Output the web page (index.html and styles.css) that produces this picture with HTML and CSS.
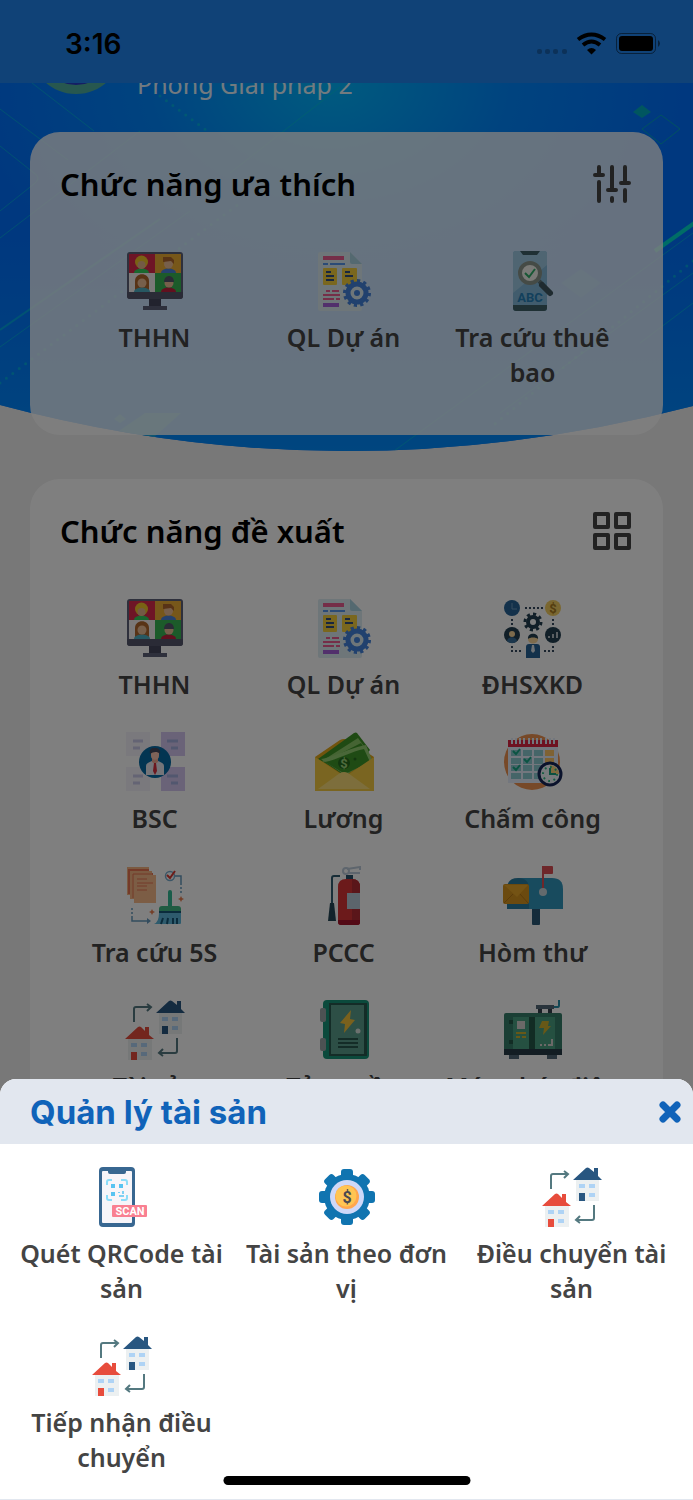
FILE: index.html
```html
<!doctype html>
<html lang="vi">
    <head>
        <meta charset="UTF-8" />
        <meta name="viewport" content="width=device-width, initial-scale=1.0" />
        <title>Quản lý tài sản</title>
        <link rel="stylesheet" href="styles.css">
    </head>
    <body>
        <!-- Icon library -->
        <svg class="sprite" aria-hidden="true">
            <symbol id="i-meeting" viewBox="0 0 60 60">
                <rect x="2" y="1" width="56" height="47" rx="3" fill="#5d6078" />
                <path d="M2 41h56v4a3 3 0 0 1-3 3H5a3 3 0 0 1-3-3z" fill="#54566c" />
                <path d="M4 3h26v19H4z" fill="#dc2a4c" />
                <path d="M30 3h26v19H30z" fill="#efae34" />
                <path d="M4 22h26v19H4z" fill="#f6f2f2" />
                <path d="M30 22h26v19H30z" fill="#38b755" />
                <path d="M9 22c0-6 15-6 15 0z" fill="#35d05e" />
                <circle cx="16.5" cy="11" r="6.5" fill="#f3c529" />
                <circle cx="16.5" cy="14" r="4" fill="#e6b58a" />
                <path d="M36 22c0-6 15-6 15 0z" fill="#4a83da" />
                <circle cx="43.5" cy="13" r="4.5" fill="#efbf97" />
                <path d="M38 11V6h8l3 3v4l-3-3z" fill="#b0662c" />
                <path d="M10 39V30c0-9 14-9 14 0v9z" fill="#b0662c" />
                <path d="M9 41c0-6 16-6 16 0z" fill="#4fb1c4" />
                <circle cx="17" cy="32" r="4.5" fill="#efbf97" />
                <path d="M36 41c0-6 15-6 15 0z" fill="#c3203e" />
                <circle cx="44" cy="32" r="4.5" fill="#efbf97" />
                <path d="M39 31c0-8 10-8 10 0z" fill="#54566c" />
                <path d="M24 48h12v8H24z" fill="#45475c" />
                <path d="M18 55h24v4H18z" fill="#5d6078" />
            </symbol>

            <symbol id="i-project" viewBox="0 0 60 60">
                <path d="M6 1h30l12 12v45a2 2 0 0 1-2 2H6a2 2 0 0 1-2-2V3a2 2 0 0 1 2-2z" fill="#dcecf2" />
                <path d="M36 1l12 12H38a2 2 0 0 1-2-2z" fill="#a9d2e0" />
                <path d="M9 5h21v4H9z" fill="#ea5c91" />
                <path d="M9 12h5v2H9zM16 12h15v2H16z" fill="#5796ec" />
                <rect x="9" y="17" width="14" height="17" rx="1" fill="#f5cf3c" />
                <rect x="28" y="17" width="15" height="17" rx="1" fill="#f5cf3c" />
                <path d="M12 21h5M12 25h8M12 29h8M31 21h5M31 25h8" stroke="#324e80" stroke-width="2" />
                <path d="M12 40h4M18 40h7M9 44h17M9 48h11M22 48h4" stroke="#ea5c91" stroke-width="2" />
                <path d="M9 52h16v4H9z" fill="#a560d8" />
                <circle cx="43" cy="42" r="9" fill="#dcecf2" stroke="#4282dc" stroke-width="5" />
                <circle cx="43" cy="42" r="12" fill="none" stroke="#4282dc" stroke-width="4" pathLength="24" stroke-dasharray="1" />
                <circle cx="43" cy="42" r="3" fill="#4282dc" />
            </symbol>

            <symbol id="i-lookup" viewBox="0 0 60 60">
                <rect x="10" y="0" width="34" height="60" rx="3" fill="#82b9db" />
                <path d="M10 42L44 14V3a3 3 0 0 0-3-3H13a3 3 0 0 0-3 3z" fill="#9fcbe5" />
                <path d="M10 54h34v3a3 3 0 0 1-3 3H13a3 3 0 0 1-3-3zM17 0h20l-3 4H20z" fill="#3e6068" />
                <path d="M36 30l4 4" stroke="#5f7579" stroke-width="4" />
                <path d="M39 34l8 8" stroke="#3e5660" stroke-width="6" stroke-linecap="round" />
                <circle cx="27" cy="22" r="10" fill="#f2f4ee" stroke="#8b968d" stroke-width="4" />
                <path d="M22 22l4 4 6-8" fill="none" stroke="#2fae69" stroke-width="2" />
                <text class="icon-word" x="27" y="51" fill="#2680b8">ABC</text>
            </symbol>

            <symbol id="i-operation" viewBox="0 0 60 60">
                <path d="M22 10h18M9 21v8M50 21v8M9 48v5h11M50 48v5H41" fill="none" stroke="#34495e" stroke-width="2" stroke-dasharray="2" />
                <circle cx="9" cy="10" r="8" fill="#266397" />
                <path d="M9 5v6h5" fill="none" stroke="#6b99be" stroke-width="1" />
                <circle cx="50" cy="10" r="8" fill="#f4ce62" />
                <text class="icon-coin" x="50" y="15" fill="#a87a20">$</text>
                <circle cx="9" cy="37" r="8" fill="#233e50" />
                <path d="M4 43c1-5 9-5 10 0-3 3-7 3-10 0z" fill="#366c98" />
                <circle cx="9" cy="36" r="3" fill="#fbd69a" />
                <circle cx="50" cy="37" r="8" fill="#233e50" />
                <path d="M46 40v-2M50 40v-4M54 40v-6" stroke="#b4bec6" stroke-width="2" />
                <circle cx="30" cy="24" r="5" fill="none" stroke="#233e50" stroke-width="4" />
                <circle cx="30" cy="24" r="8" fill="none" stroke="#233e50" stroke-width="3" pathLength="16" stroke-dasharray="1" />
                <path d="M23 60V49a3 3 0 0 1 3-3h8a3 3 0 0 1 3 3v11z" fill="#266397" />
                <path d="M25 41c-1-7 11-7 10 0z" fill="#233e50" />
                <path d="M25 41c2-2 8-2 10 0 0 6-10 6-10 0z" fill="#fbd69a" />
                <path d="M29 47h2l1 6-2 2-2-2z" fill="#dce5ec" />
            </symbol>

            <symbol id="i-bsc" viewBox="0 0 60 60">
                <path d="M1 0h24v24H1zM1 35h24v24H1z" fill="#f3f0fa" fill-opacity="0.8" />
                <path d="M36 0h24v24H36zM36 35h24v24H36z" fill="#d5c7f1" />
                <path d="M8 9h10M8 16h7M8 44h10M8 51h7" stroke="#c9c8e8" stroke-width="3" />
                <path d="M42 9h11M46 16h7M42 44h11M46 51h7" stroke="#a4aede" stroke-width="3" />
                <circle cx="30" cy="30" r="16" fill="#076ba4" />
                <path d="M21 43V34c0-3 4-4 6-5h6c2 1 6 2 6 5v9z" fill="#eaeaf2" />
                <path d="M27 26h6v4l-3 2-3-2z" fill="#f0aa94" />
                <path d="M26 19h8v5c0 5-8 5-8 0z" fill="#ffc6b1" />
                <path d="M25 22c-1-6 2-6 5-6s6 1 5 6c-3-3-7-2-10 0z" fill="#43495c" />
                <path d="M29 31h2l1 8-2 4-2-4z" fill="#d8303f" />
            </symbol>

            <symbol id="i-salary" viewBox="0 0 60 60">
                <path d="M1 25L26 8q4-2 8 0l26 17v34H1z" fill="#e3a81b" />
                <path d="M4 27L40 1q2-1 3 0l13 17-23 25z" fill="#3e9526" />
                <path d="M8 29L44 6l11 15-22 22z" fill="#8bc867" />
                <path d="M10 30L47 11l8 13-24 20z" fill="#3e9526" />
                <path d="M7 27c10-1 31-12 45-14l6 15-27 15z" fill="#95cf72" />
                <path d="M11 30c11-2 28-11 39-13l6 13-25 12z" fill="#3f9629" />
                <circle cx="30" cy="31" r="6" fill="#276d1e" />
                <text class="icon-coin" x="30" y="36" fill="#9fd67c">$</text>
                <circle cx="41" cy="27" r="1.5" fill="#276d1e" />
                <path d="M1 25l26 17q4 2 8 0l25-17v34H1z" fill="#f4cb42" />
                <path d="M4 57l22-16q4-2 8 0l22 16z" fill="#fadd78" />
            </symbol>

            <symbol id="i-attendance" viewBox="0 0 60 60">
                <circle cx="29" cy="30" r="28" fill="#ef9250" />
                <path d="M5 15h50v36H5z" fill="#e6effc" />
                <path d="M5 8h50v7H5z" fill="#dd2442" />
                <path d="M9 6v6M13 6v6M17 6v6M21 6v6M26 6v6M30 6v6M34 6v6M38 6v6M43 6v6M47 6v6M51 6v6" stroke="#e6effc" stroke-width="2" />
                <path d="M8 21h10M20 21h9M31 21h9M8 29h10M20 29h9M31 29h9M8 36h10M20 36h9M31 36h9M8 44h10M20 44h9M31 44h9" stroke="#8bcad1" stroke-width="6" />
                <path d="M42 21h9M42 29h9" stroke="#ffc466" stroke-width="6" />
                <path d="M10 19l3 3 4-5M21 27l3 3 4-5M10 35l3 3 4-5" fill="none" stroke="#17a886" stroke-width="2" />
                <circle cx="47" cy="42" r="11" fill="#f1f6fb" stroke="#172758" stroke-width="3" />
                <path d="M47 42v-9a9 9 0 0 1 9 9z" fill="#ffd57d" />
                <circle cx="47" cy="42" r="7" fill="none" stroke="#33bb86" stroke-width="2" pathLength="24" stroke-dasharray="1 2" />
                <path d="M47 36v6h6" fill="none" stroke="#18a17f" stroke-width="2" />
            </symbol>

            <symbol id="i-clean" viewBox="0 0 60 60">
                <path d="M2 1h22v28H2z" fill="#f7b583" />
                <path d="M4 28V4h20M8 32V8h20" fill="none" stroke="#e87552" stroke-width="2" />
                <path d="M5 5h22v28H5z" fill="#f7b583" />
                <path d="M8 32V8h20" fill="none" stroke="#e87552" stroke-width="1" />
                <path d="M9 9h22v28H9z" fill="#f9bb8b" />
                <path d="M12 13h10M12 17h16M12 20h10M12 24h10" stroke="#e87552" stroke-width="1" />
                <circle cx="45" cy="10" r="4.5" fill="none" stroke="#79adce" stroke-width="1.5" />
                <path d="M42 9l3 3 5-7" fill="none" stroke="#db3932" stroke-width="2" />
                <path d="M50 10h6v9M56 21v2M56 25v2M7 42v2M7 46v2M7 50v5h15" fill="none" stroke="#6699bd" stroke-width="1.5" />
                <path d="M22 52l4 3-4 3z" fill="#6699bd" />
                <path d="M27 43l1 2 2 1-2 1-1 2-1-2-2-1 2-1zM56 30l1 2 2 1-2 1-1 2-1-2-2-1 2-1z" fill="#e97f51" />
                <rect x="43" y="24" width="4" height="18" rx="2" fill="#33bb94" />
                <path d="M34 45v-2a3 3 0 0 1 3-3h16a3 3 0 0 1 3 3v2z" fill="#41b884" />
                <path d="M34 47h22v10a1 1 0 0 1-1 1H29q5-2 5-11z" fill="#5cb6da" />
                <path d="M34 46h22M38 52l-2 6M43 52l-1 6M48 52v6M52 52v6" stroke="#175878" stroke-width="2" />
            </symbol>

            <symbol id="i-fire" viewBox="0 0 60 60">
                <path d="M33 3l13-2v3M35 7h11" fill="none" stroke="#bccbda" stroke-width="2" />
                <circle cx="32" cy="5" r="3" fill="none" stroke="#bccbda" stroke-width="2" />
                <path d="M26 10h-6q-2 0-2 2v26" fill="none" stroke="#315d70" stroke-width="2" />
                <path d="M16 37h4l2 18h-8z" fill="#244656" />
                <path d="M32 9h7v6h-7z" fill="#28506a" />
                <path d="M24 56V21q0-8 8-8h6q8 0 8 8v35q0 3-3 3H27q-3 0-3-3z" fill="#d83537" />
                <path d="M38 13q8 0 8 8v35q0 3-3 3h-5z" fill="#b52d34" />
                <path d="M24 54h22v2q0 3-3 3H27q-3 0-3-3z" fill="#a6152c" />
                <path d="M33 27h13v16H33z" fill="#b9cad9" />
            </symbol>

            <symbol id="i-mail" viewBox="0 0 60 60">
                <path d="M29 42h8v16a1 1 0 0 1-1 1h-6a1 1 0 0 1-1-1z" fill="#2b5876" />
                <path d="M15 12h34q11 0 11 11v20H15z" fill="#3196bd" />
                <path d="M4 43V23q0-11 11-11t11 11v20z" fill="#297ca0" />
                <rect x="0" y="18" width="26" height="20" rx="2" fill="#d6951f" />
                <path d="M1 19l13 12 11-12z" fill="#e8a628" />
                <path d="M1 37l9-9M25 37l-8-9" stroke="#b87817" stroke-width="1" />
                <path d="M40 0v24" stroke="#dc4e55" stroke-width="2" />
                <rect x="39" y="0" width="11" height="8" rx="1" fill="#dc4e55" />
                <circle cx="40" cy="26" r="4" fill="#c9d5da" />
            </symbol>

            <symbol id="i-transfer" viewBox="0 0 60 60">
                <path d="M34 12h23v22H34z" fill="#ecf0f1" />
                <path d="M31 13L44 1q1.5-1 3 0l5 4V1h4v8l4 4z" fill="#285680" />
                <path d="M37 17h6v4h-6zM47 17h6v4h-6zM47 26h6v4h-6z" fill="#aed3f5" />
                <path d="M37 26h6v8h-6z" fill="#285680" />
                <path d="M3 38h24v22H3z" fill="#ecf0f1" />
                <path d="M0 39l13-12q1.5-1 3 0l4 4v-4h4v8l5 4z" fill="#e74c3c" />
                <path d="M6 43h6v4H6zM16 43h6v4h-6zM16 52h6v4h-6z" fill="#aed3f5" />
                <path d="M6 52h6v8H6z" fill="#e74c3c" />
                <path d="M9 22V9q0-2 2-2h15M22 4l4 3-4 4M52 38v13q0 2-2 2H35M38 49l-4 4 4 3" fill="none" stroke="#547980" stroke-width="2" />
            </symbol>

            <symbol id="i-cabinet" viewBox="0 0 60 60">
                <rect x="9" y="0" width="46" height="59" rx="4" fill="#169578" />
                <path d="M15 3h38v53H15z" fill="#28594f" />
                <path d="M17 5h33v49H17z" fill="#5b9e8c" />
                <rect x="6" y="8" width="6" height="14" rx="2" fill="#99a4a6" />
                <rect x="6" y="38" width="6" height="13" rx="2" fill="#99a4a6" />
                <path d="M37 10L26 23l5 1-1 9 11-13-5-1z" fill="#f5c23b" />
                <circle cx="44" cy="31" r="2.5" fill="#d9e2df" />
                <path d="M24 39h20M24 43h20M24 47h20" stroke="#28594f" stroke-width="2" />
            </symbol>

            <symbol id="i-generator" viewBox="0 0 60 60">
                <path d="M35 9h4v5h-4zM45 9h4v5h-4z" fill="#35414d" />
                <path d="M33 5h18v4H33z" fill="#536978" />
                <path d="M51 7h4q1 0 1-2V0" fill="none" stroke="#248fa9" stroke-width="2" />
                <path d="M6 54h10v5H6zM44 54h10v5H44z" fill="#536978" />
                <rect x="1" y="13" width="58" height="38" rx="2" fill="#367e6b" />
                <path d="M10 17h16v32H10zM32 17h20v32H32z" fill="#4aa083" />
                <path d="M26 17h6v32h-6z" fill="#245848" />
                <path d="M1 49h58v6H1z" fill="#263b46" />
                <path d="M6 20h4v4H6zM6 40h4v4H6z" fill="#245848" />
                <path d="M14 21h8v8h-8z" fill="#d7d3d1" />
                <path d="M13 33h10M13 37h4M19 37h4" stroke="#cfb02f" stroke-width="2" />
                <path d="M39 21h7l-1 5h3l-8 9 1-7h-5z" fill="#cfb02f" />
                <path d="M37 45h2M41 45h2M45 45h4v-6" fill="none" stroke="#d7d3d1" stroke-width="2" />
            </symbol>

            <symbol id="i-scan" viewBox="0 0 60 60">
                <rect x="7" y="0" width="36" height="60" rx="4" fill="#386791" />
                <rect x="10" y="4" width="30" height="52" rx="1" fill="#f7f5f9" />
                <path d="M16 3h18v2q0 2-2 2H18q-2 0-2-2z" fill="#386791" />
                <path d="M15 18v-3q0-2 2-2h3M29 13h4q2 0 2 2v3M15 28v3q0 2 2 2h3M29 33h4q2 0 2-2v-3" fill="none" stroke="#8bdcf8" stroke-width="2" />
                <path d="M19 17h4v4h-4zM27 17h4v4h-4zM19 25h4v4h-4z" fill="#57c3f1" />
                <path d="M27 25v1M31 24v3M27 29h5" stroke="#57c3f1" stroke-width="1.5" />
                <rect x="20" y="38" width="35" height="12" rx="1" fill="#f98091" />
                <text class="icon-scan" x="38" y="48" fill="#fff">SCAN</text>
            </symbol>

            <symbol id="i-asset" viewBox="0 0 60 60">
                <g fill="#1074b0">
                    <rect x="24" y="2" width="12" height="56" rx="3" />
                    <rect x="24" y="2" width="12" height="56" rx="3" transform="rotate(45 30 30)" />
                    <rect x="24" y="2" width="12" height="56" rx="3" transform="rotate(90 30 30)" />
                    <rect x="24" y="2" width="12" height="56" rx="3" transform="rotate(135 30 30)" />
                    <circle cx="30" cy="30" r="23" />
                </g>
                <circle cx="30" cy="30" r="17" fill="#ced8f8" />
                <circle cx="30" cy="30" r="12" fill="#ffa64d" />
                <circle cx="29" cy="29" r="10.5" fill="#ffc553" />
                <text class="icon-dollar" x="30" y="36" fill="#4b4a50">$</text>
            </symbol>
        </svg>

        <header class="status-bar">
            <span class="status-time">3:16</span>
            <svg class="status-icons" viewBox="0 0 124 24" aria-hidden="true">
                <g class="status-signal">
                    <rect x="1" y="17" width="5" height="5" rx="2" />
                    <rect x="9" y="17" width="5" height="5" rx="2" />
                    <rect x="17" y="17" width="5" height="5" rx="2" />
                    <rect x="26" y="17" width="5" height="5" rx="2" />
                </g>
                <path d="M42 7.5q13.5-10 27 0M47 13q8.500-7 17 0" fill="none" stroke="#000" stroke-width="4" />
                <path d="M51 18q4.500-4 9 0l-4.500 4.500z" />
                <rect x="80.5" y="1.5" width="39" height="20" rx="5" fill="none" stroke="#000" stroke-opacity="0.5" />
                <rect x="83" y="4" width="34" height="15" rx="3" />
                <path d="M122 8q4 3.500 0 7z" fill-opacity="0.5" />
            </svg>
        </header>

        <main>
            <section class="hero">
                <svg class="hero-bg" viewBox="0 0 693 368" preserveAspectRatio="none" aria-hidden="true">
                    <defs>
                        <radialGradient id="sky" cx="330" cy="0" r="360" gradientUnits="userSpaceOnUse" gradientTransform="matrix(1 0 0 .7 0 0)">
                            <stop offset="0" stop-color="#00b6ff" />
                            <stop offset="0.5" stop-color="#0087ff" />
                            <stop offset="1" stop-color="#0070ff" />
                        </radialGradient>
                        <linearGradient id="edge" x1="0" y1="0" x2="0" y2="1">
                            <stop offset="0.4" stop-color="#0088ff" stop-opacity="0" />
                            <stop offset="1" stop-color="#008cff" />
                        </linearGradient>
                        <clipPath id="curve">
                            <path d="M0 0h693v323Q520 368 346 368T0 322z" />
                        </clipPath>
                    </defs>
                    <g clip-path="url(#curve)">
                        <path d="M0 0h693v368H0z" fill="url(#sky)" />
                        <path d="M0 0h693v368H0z" fill="url(#edge)" />
                        <g fill="none" stroke="#00d4ce" stroke-opacity="0.5">
                            <path d="M0 26l68 51M0 63l34 27q8 5 0 11L0 128M32 0l62 48M0 155L140 48M0 264L190 128M340 4L230 90" />
                            <path d="M0 247L160 136" stroke-width="2" />
                            <path d="M394 368L480 305L693 150M693 190L500 330M640 260l53-40" />
                            <path d="M0 300L240 120M160 13l50 37M693 178L490 345" stroke-width="3" stroke-linecap="round" stroke-dasharray="0 8" />
                        </g>
                        <path d="M655 168L700 136" stroke="#00f5c0" stroke-opacity="0.8" stroke-width="4" />
                        <path d="M642 22l9 7-9 6-9-6z" fill="#00adbf" />
                        <path d="M661 32l19 14-19 15-19-15z" fill="none" stroke="#00a4c4" />
                        <path d="M113 352l32-22h36l-30 27zM114 336l6-5 6 5-6 4z" fill="#2cbcd0" fill-opacity="0.7" />
                        <path d="M561 200l20-14 20 14-20 15z" fill="#2cbcd0" fill-opacity="0.3" />
                    </g>
                </svg>

                <div class="profile">
                    <span class="avatar"></span>
                    <span class="department">Phòng Giải pháp 2</span>
                </div>

                <div class="card card-favorite">
                    <div class="card-header">
                        <h2>Chức năng ưa thích</h2>
                        <button class="icon-button" type="button" aria-label="Tùy chỉnh">
                            <svg viewBox="0 0 38 38">
                                <path d="M6 2v6M2 10h8M6 17v19M19 2v23M15 25h8M19 33v3M32 2v15M28 18h8M32 25v11" />
                            </svg>
                        </button>
                    </div>
                    <nav class="tiles">
                        <a class="tile" href="#"><svg class="tile-icon"><use href="#i-meeting" /></svg>THHN</a>
                        <a class="tile" href="#"><svg class="tile-icon"><use href="#i-project" /></svg>QL Dự án</a>
                        <a class="tile" href="#"><svg class="tile-icon"><use href="#i-lookup" /></svg>Tra cứu thuê bao</a>
                    </nav>
                </div>
            </section>

            <section class="card card-suggest">
                <div class="card-header">
                    <h2>Chức năng đề xuất</h2>
                    <button class="icon-button" type="button" aria-label="Tất cả chức năng">
                        <svg viewBox="0 0 38 38">
                            <path d="M2 2h13v13H2zM23 2h13v13H23zM2 23h13v13H2zM23 23h13v13H23z" />
                        </svg>
                    </button>
                </div>
                <nav class="tiles">
                    <a class="tile" href="#"><svg class="tile-icon"><use href="#i-meeting" /></svg>THHN</a>
                    <a class="tile" href="#"><svg class="tile-icon"><use href="#i-project" /></svg>QL Dự án</a>
                    <a class="tile" href="#"><svg class="tile-icon"><use href="#i-operation" /></svg>ĐHSXKD</a>
                    <a class="tile" href="#"><svg class="tile-icon"><use href="#i-bsc" /></svg>BSC</a>
                    <a class="tile" href="#"><svg class="tile-icon"><use href="#i-salary" /></svg>Lương</a>
                    <a class="tile" href="#"><svg class="tile-icon"><use href="#i-attendance" /></svg>Chấm công</a>
                    <a class="tile" href="#"><svg class="tile-icon"><use href="#i-clean" /></svg>Tra cứu 5S</a>
                    <a class="tile" href="#"><svg class="tile-icon"><use href="#i-fire" /></svg>PCCC</a>
                    <a class="tile" href="#"><svg class="tile-icon"><use href="#i-mail" /></svg>Hòm thư</a>
                    <a class="tile" href="#"><svg class="tile-icon"><use href="#i-transfer" /></svg>Tài sản</a>
                    <a class="tile" href="#"><svg class="tile-icon"><use href="#i-cabinet" /></svg>Tủ nguồn</a>
                    <a class="tile" href="#"><svg class="tile-icon"><use href="#i-generator" /></svg>Máy phát điện</a>
                </nav>
            </section>
        </main>

        <div class="backdrop"></div>

        <section class="sheet" role="dialog" aria-labelledby="sheet-title">
            <div class="sheet-header">
                <h1 id="sheet-title">Quản lý tài sản</h1>
                <button class="sheet-close" type="button" aria-label="Đóng">
                    <svg viewBox="0 0 22 22">
                        <path d="M4 4l14 14M18 4L4 18" />
                    </svg>
                </button>
            </div>
            <nav class="tiles sheet-tiles">
                <a class="tile" href="#"><svg class="tile-icon"><use href="#i-scan" /></svg>Quét QRCode tài sản</a>
                <a class="tile" href="#"><svg class="tile-icon"><use href="#i-asset" /></svg>Tài sản theo đơn vị</a>
                <a class="tile" href="#"><svg class="tile-icon"><use href="#i-transfer" /></svg>Điều chuyển tài sản</a>
                <a class="tile" href="#"><svg class="tile-icon"><use href="#i-transfer" /></svg>Tiếp nhận điều chuyển</a>
            </nav>
            <span class="home-indicator"></span>
        </section>
    </body>
</html>
```
FILE: styles.css
```css
* {
    margin: 0;
    padding: 0;
    box-sizing: border-box;
}

body {
    font-family: "Noto Sans", "Open Sans", sans-serif;
    background: #f0f0f0;
    color: #444;
    min-height: 100vh;
}

button {
    border: none;
    background: none;
    cursor: pointer;
}

.sprite {
    position: absolute;
    width: 0;
    height: 0;
}

/* Status bar */
.status-bar {
    position: sticky;
    top: 0;
    z-index: 2;
    display: flex;
    align-items: center;
    justify-content: space-between;
    height: 83px;
    padding: 5px 33px 0 65px;
    background: #2084ee;
    color: #000;
}

.status-time {
    font-family: Inter, sans-serif;
    font-size: 28px;
    font-weight: 600;
}

.status-icons {
    width: 124px;
    height: 24px;
}

.status-signal {
    fill-opacity: 0.25;
}

/* Hero */
.hero {
    position: relative;
    display: flow-root;
    padding: 0 30px;
}

.hero-bg {
    position: absolute;
    top: 0;
    left: 0;
    width: 100%;
    height: 368px;
}

/* scrolled under the status bar */
.profile {
    position: relative;
    display: flex;
    align-items: flex-end;
    gap: 15px;
    height: 92px;
    margin-top: -81px;
}

.avatar {
    width: 92px;
    height: 92px;
    border: 9px solid #4fae9e;
    border-radius: 50%;
    background: #283cc8;
}

.department {
    margin-bottom: -8px;
    color: #fff;
    font-size: 25px;
    line-height: 35px;
    opacity: 0.9;
}

/* Cards */
.card {
    padding: 32px 32px 45px 30px;
    border-radius: 30px;
    background: #fff;
}

.card-favorite {
    position: relative;
    margin-top: 38px;
    background: rgba(255, 255, 255, 0.8);
}

.card-suggest {
    margin: 44px 30px 0;
}

.card-header {
    display: flex;
    align-items: center;
    justify-content: space-between;
    height: 40px;
    margin-bottom: 47px;
}

h2 {
    color: #000;
    font-size: 31px;
    font-weight: 600;
    line-height: 40px;
}

.icon-button,
.icon-button svg {
    display: block;
    width: 38px;
    height: 38px;
}

.icon-button path {
    fill: none;
    stroke: #444;
    stroke-width: 4;
    stroke-linecap: round;
    stroke-linejoin: round;
}

/* Tiles */
.tiles {
    display: grid;
    grid-template-columns: repeat(3, 1fr);
    gap: 30px 0;
    padding-right: 4px;
}

.tile {
    display: flex;
    flex-direction: column;
    align-items: center;
    gap: 9px;
    padding: 0 4px;
    color: #444;
    font-size: 25px;
    font-weight: 600;
    line-height: 35px;
    text-align: center;
    text-decoration: none;
}

.tile-icon {
    width: 60px;
    height: 60px;
}

.icon-word,
.icon-coin,
.icon-scan,
.icon-dollar {
    font-family: Roboto, sans-serif;
    font-weight: 700;
    text-anchor: middle;
}

.icon-word,
.icon-coin {
    font-size: 13px;
}

.icon-scan {
    font-size: 11px;
}

.icon-dollar {
    font-size: 16px;
}

/* Bottom sheet */
.backdrop {
    position: fixed;
    inset: 0;
    z-index: 3;
    background: rgba(0, 0, 0, 0.5);
}

.sheet {
    position: fixed;
    right: 0;
    bottom: 0;
    left: 0;
    z-index: 4;
    overflow: hidden;
    border-bottom: 1px solid #e2e7ef;
    border-radius: 16px 16px 0 0;
    background: #fff;
}

.sheet-header {
    display: flex;
    align-items: center;
    justify-content: space-between;
    height: 65px;
    padding: 0 12px 0 30px;
    background: #e2e7ef;
}

h1 {
    color: #1063b9;
    font-family: Inter, sans-serif;
    font-size: 33px;
    font-weight: 700;
    line-height: 40px;
}

.sheet-close,
.sheet-close svg {
    display: block;
    width: 22px;
    height: 22px;
}

.sheet-close path {
    fill: none;
    stroke: #1063b9;
    stroke-width: 7;
    stroke-linecap: round;
}

.sheet-tiles {
    padding: 23px 9px 24px;
}

.sheet-tiles .tile {
    padding: 0 8px;
}

.home-indicator {
    position: absolute;
    bottom: 14px;
    left: 50%;
    width: 247px;
    height: 9px;
    border-radius: 5px;
    background: #000;
    transform: translateX(-50%);
}
```
